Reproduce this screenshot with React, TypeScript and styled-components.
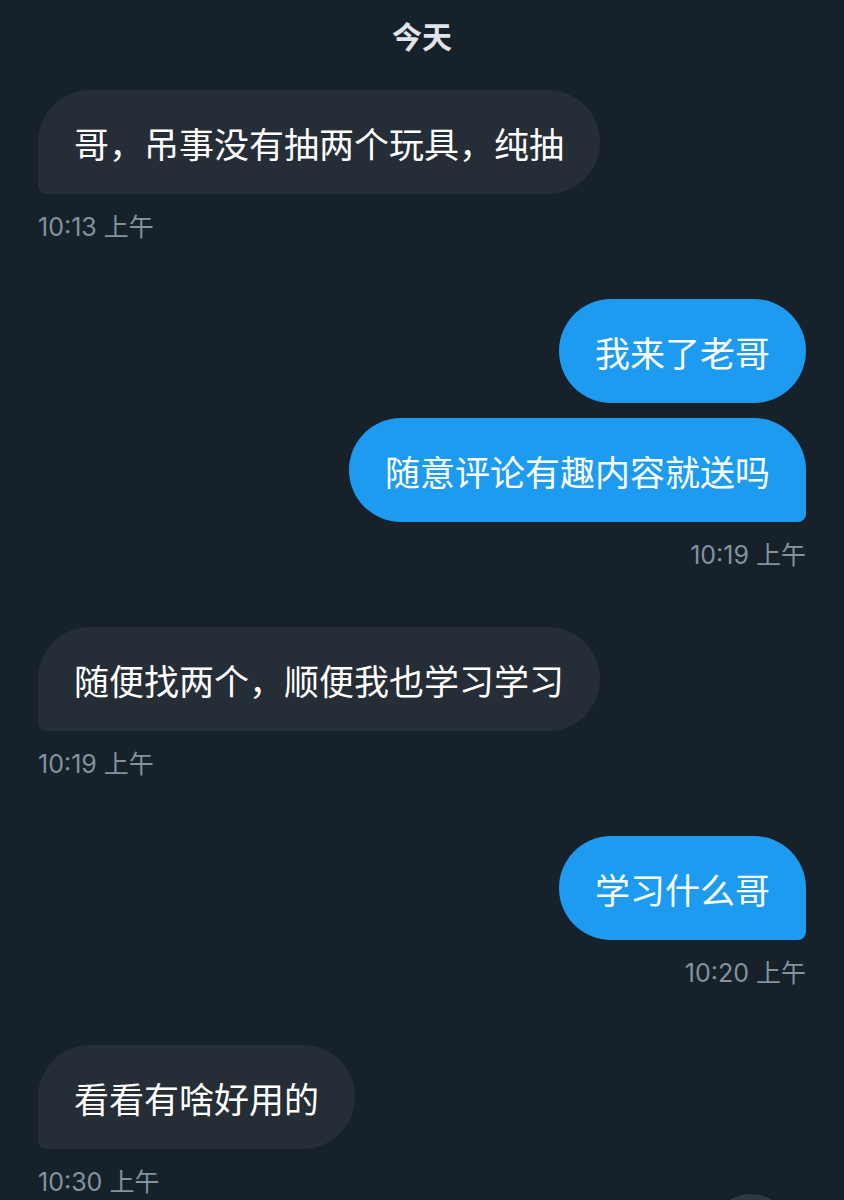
import { FC } from "react";
import styled, { createGlobalStyle } from "styled-components";

type Message = { id: number; text: string };

type MessageGroup = {
  id: number;
  mine: boolean;
  time: string;
  messages: Message[];
};

const groups: MessageGroup[] = [
  {
    id: 1,
    mine: false,
    time: "10:13 上午",
    messages: [{ id: 1, text: "哥，吊事没有抽两个玩具，纯抽" }],
  },
  {
    id: 2,
    mine: true,
    time: "10:19 上午",
    messages: [
      { id: 2, text: "我来了老哥" },
      { id: 3, text: "随意评论有趣内容就送吗" },
    ],
  },
  {
    id: 3,
    mine: false,
    time: "10:19 上午",
    messages: [{ id: 4, text: "随便找两个，顺便我也学习学习" }],
  },
  {
    id: 4,
    mine: true,
    time: "10:20 上午",
    messages: [{ id: 5, text: "学习什么哥" }],
  },
  {
    id: 5,
    mine: false,
    time: "10:30 上午",
    messages: [{ id: 6, text: "看看有啥好用的" }],
  },
];

const GlobalStyle = createGlobalStyle`
  * {
    box-sizing: border-box;
  }

  body {
    margin: 0;
    background: #17212a;
    color: #ffffff;
    font-family: "Noto Sans CJK SC", sans-serif;
  }
`;

const Page = styled.main`
  padding: 15px 38px 0;
`;

const DayTitle = styled.h1`
  margin: 0 0 35px;
  color: #e1e5ea;
  font-size: 30px;
  font-weight: 700;
  line-height: 40px;
  text-align: center;
`;

const Thread = styled.div`
  display: flex;
  flex-direction: column;
  gap: 54px;
`;

const Group = styled.section<{ $mine: boolean }>`
  display: flex;
  flex-direction: column;
  align-items: ${({ $mine }) => ($mine ? "flex-end" : "flex-start")};
  gap: 15px;
`;

const bubbleRadius = (mine: boolean, last: boolean) => {
  if (!last) return "52px";
  return mine ? "52px 52px 8px 52px" : "52px 52px 52px 8px";
};

const Bubble = styled.p<{ $mine: boolean; $last: boolean }>`
  margin: 0;
  padding: 27px 36px 25px;
  border-radius: ${({ $mine, $last }) => bubbleRadius($mine, $last)};
  background: ${({ $mine }) => ($mine ? "#1d9bf0" : "#252e36")};
  font-size: 35px;
  line-height: 52px;
`;

const Time = styled.time`
  color: #8292a0;
  font-family: Inter, "Noto Sans CJK SC", sans-serif;
  font-size: 25px;
  font-weight: 400;
  line-height: 36px;
`;

const ScrollButton = styled.button`
  position: fixed;
  right: 50px;
  bottom: -80px;
  width: 86px;
  height: 86px;
  border: 0;
  border-radius: 50%;
  background: #2c3944;
  box-shadow: 0 0 4px #101a26;
`;

const ChatGroup: FC<{ group: MessageGroup }> = ({ group }) => {
  const { mine, messages, time } = group;

  return (
    <Group $mine={mine}>
      {messages.map((message, index) => (
        <Bubble
          key={message.id}
          $mine={mine}
          $last={index === messages.length - 1}
        >
          {message.text}
        </Bubble>
      ))}
      <Time>{time}</Time>
    </Group>
  );
};

const App: FC = () => {
  return (
    <>
      <GlobalStyle />
      <Page>
        <DayTitle>今天</DayTitle>
        <Thread>
          {groups.map((group) => (
            <ChatGroup key={group.id} group={group} />
          ))}
        </Thread>
      </Page>
      <ScrollButton type="button" aria-label="滚动到底部" />
    </>
  );
};

export default App;
